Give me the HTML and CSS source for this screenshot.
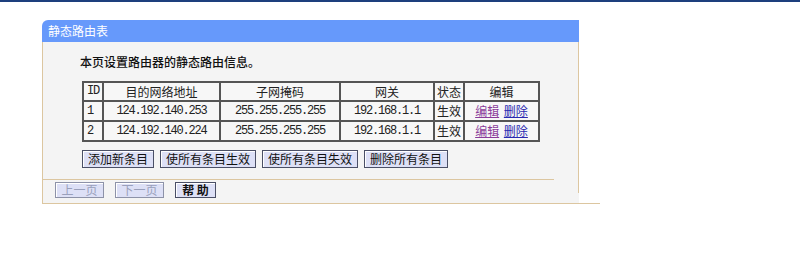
FILE: index.html
```html
<!DOCTYPE html>
<html lang="zh-CN">
<head>
<meta charset="utf-8">
<title>静态路由表</title>
<link rel="stylesheet" href="styles.css">
</head>
<body>
<div class="topbar"></div>
<div class="panel">
  <div class="panel-head">静态路由表</div>
  <div class="panel-body">
    <p class="intro">本页设置路由器的静态路由信息。</p>
    <table class="routes">
      <colgroup>
        <col class="c-id"><col class="c-dest"><col class="c-mask"><col class="c-gw"><col class="c-st"><col class="c-ed">
      </colgroup>
      <tr>
        <th class="mono">ID</th><th>目的网络地址</th><th>子网掩码</th><th>网关</th><th>状态</th><th>编辑</th>
      </tr>
      <tr>
        <td class="mono left">1</td><td class="mono">124.192.140.253</td><td class="mono">255.255.255.255</td><td class="mono">192.168.1.1</td><td>生效</td>
        <td><a class="visited" href="#">编辑</a> <a class="link" href="#">删除</a></td>
      </tr>
      <tr>
        <td class="mono left">2</td><td class="mono">124.192.140.224</td><td class="mono">255.255.255.255</td><td class="mono">192.168.1.1</td><td>生效</td>
        <td><a class="visited" href="#">编辑</a> <a class="link" href="#">删除</a></td>
      </tr>
    </table>
    <div class="actions">
      <button class="btn">添加新条目</button>
      <button class="btn">使所有条目生效</button>
      <button class="btn">使所有条目失效</button>
      <button class="btn">删除所有条目</button>
    </div>
    <div class="sep"></div>
  </div>
  <div class="panel-foot">
    <button class="btn small disabled">上一页</button>
    <button class="btn small disabled">下一页</button>
    <button class="btn small strong">帮 助</button>
  </div>
</div>
</body>
</html>
```

FILE: styles.css
```css
html, body {
  margin: 0;
  padding: 0;
  background: #ffffff;
  font-family: "Noto Sans CJK SC", "Noto Sans", sans-serif;
  font-size: 12px;
  color: #222;
}

.topbar {
  height: 2px;
  background: #1d3f7d;
}

.panel {
  margin: 18px 0 0 42px;
  width: 558px;
}

.panel-head {
  width: 537px;
  box-sizing: border-box;
  height: 22px;
  line-height: 22px;
  padding-left: 6px;
  color: #ffffff;
  background: #6699fb;
  border-top-left-radius: 6px;
  font-size: 12px;
}

.panel-body {
  width: 537px;
  box-sizing: border-box;
  background: #f4f4f4;
  border-left: 1px solid #dcc6a0;
  border-right: 1px solid #dcc6a0;
  padding-top: 12px;
}

.intro {
  margin: 0 0 11px 37px;
  line-height: 16px;
  font-size: 12px;
  color: #111;
  font-weight: 500;
}

.routes {
  margin-left: 39px;
  width: 456px;
  table-layout: fixed;
  border-collapse: collapse;
  border: 2px solid #555;
  background: #f7f7f7;
}

.c-id { width: 20px; }
.c-dest { width: 117px; }
.c-mask { width: 120px; }
.c-gw { width: 94px; }
.c-st { width: 30px; }
.c-ed { width: 75px; }

.routes th, .routes td {
  border: 2px solid #555;
  padding: 0;
  text-align: center;
  font-weight: normal;
  white-space: nowrap;
  overflow: hidden;
  color: #222;
}

.routes th { height: 17px; line-height: 17px; }
.routes td { height: 18px; line-height: 18px; }

.routes .mono {
  font-family: "Liberation Mono", "DejaVu Sans Mono", monospace;
  font-size: 12px;
  letter-spacing: -1.2px;
}

.routes .left {
  text-align: left;
  padding-left: 3px;
}

.routes a { text-decoration: underline; margin: 0 1px; }
.routes a.visited { color: #8a3c9a; }
.routes a.link { color: #2a2ab0; }

.actions {
  display: flex;
  gap: 6px;
  margin: 8px 0 0 39px;
}

.btn {
  font-family: "Noto Sans CJK SC", "Noto Sans", sans-serif;
  font-size: 12px;
  line-height: 16px;
  height: 18px;
  padding: 0 5px;
  margin: 0;
  color: #111;
  background: #dde0f6;
  border: 1px solid #4a4f66;
  box-shadow: inset 1px 1px 0 #ffffff;
  border-radius: 0;
  white-space: nowrap;
}

.sep {
  margin-top: 11px;
  width: 511px;
  height: 1px;
  background: #dcc6a0;
}

.panel-foot {
  display: flex;
  gap: 11px;
  height: 24px;
  box-sizing: border-box;
  padding: 2px 0 0 12px;
  border-left: 1px solid #dcc6a0;
  border-bottom: 1px solid #dcc6a0;
  background:
    linear-gradient(to right, transparent 535px, #dcc6a0 535px, #dcc6a0 536px, transparent 536px) top left / 100% 13px no-repeat,
    linear-gradient(to right, #f4f4f4 536px, #ffffff 536px);
}

.btn.small {
  height: 16px;
  line-height: 14px;
  padding: 0;
  text-align: center;
}

.btn.disabled {
  color: #9aa0bb;
  border-color: #8d92a8;
  width: 49px;
}

.btn.strong {
  font-weight: bold;
  width: 41px;
}
```
